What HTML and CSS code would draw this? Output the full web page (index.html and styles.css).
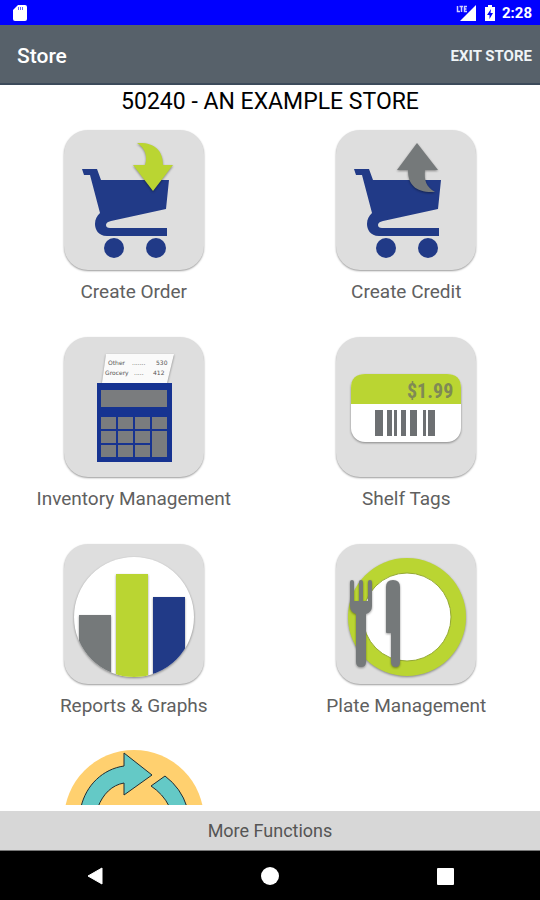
FILE: index.html
```html
<!DOCTYPE html>
<html lang="en">

<head>
  <meta charset="UTF-8">
  <meta name="viewport" content="width=device-width,initial-scale=1.0">
  <title>Store</title>
  <link rel="stylesheet" href="styles.css">
</head>

<body>
  <div class="page_main">

    <div class="status_bar">
      <svg class="icon_sd" viewBox="0 0 14 18" width="14" height="18">
        <path fill="#fff" d="M5 1H12Q14 1 14 3V15Q14 17 12 17H2Q0 17 0 15V6Z" />
        <path fill="#00f" fill-opacity=".6" d="M5 3h1v3h-1zM7 3h1v3h-1zM9 3h1v3h-1z" />
      </svg>
      <div class="status_right">
        <svg viewBox="0 0 22 18" width="22" height="18">
          <path fill="#fff" d="M20 1V17H4Z" />
          <path fill="#00f" d="M0 0H11V9H0Z" />
          <path fill="none" stroke="#fff" stroke-opacity=".8" stroke-width="1.500" d="M1.500 2V7.500H4M3.500 2.500H7M5.500 2.500V8M11 2.500H8.500V7.500H11M8.500 5H10.500" />
        </svg>
        <svg viewBox="0 0 12 18" width="12" height="18">
          <path fill="#fff" d="M4 1H8V3H11V17H1V3H4Z" />
          <path fill="#00f" d="M7 5L3 11H5.500V15L9 9H6.500Z" />
        </svg>
        <span>2:28</span>
      </div>
    </div>

    <header class="toolbar">
      <h1>Store</h1>
      <button type="button">EXIT STORE</button>
    </header>

    <main class="content">
      <h2>50240 - AN EXAMPLE STORE</h2>

      <div class="functions">

        <button type="button" class="box">
          <svg class="tile" viewBox="0 0 140 140">
            <g fill="#213a87">
              <path d="M18 39H33L37 50H105L102 79L47 91Q42 92 42 95Q42 98 46 98H103V106H43C34 106 31 99 31 94C31 89 33 86 36 83L26 45H20Z" />
              <circle cx="50" cy="118" r="10" />
              <circle cx="92" cy="118" r="10" />
            </g>
            <path class="raised" fill="#bad532" d="M73 13C90 12 99 20 99 35H109L89 61L69 35H81C84 26 81 18 73 13Z" />
          </svg>
          <span>Create Order</span>
        </button>

        <button type="button" class="box">
          <svg class="tile" viewBox="0 0 140 140">
            <g fill="#213a87">
              <path d="M18 39H33L37 50H105L102 79L47 91Q42 92 42 95Q42 98 46 98H103V106H43C34 106 31 99 31 94C31 89 33 86 36 83L26 45H20Z" />
              <circle cx="50" cy="118" r="10" />
              <circle cx="92" cy="118" r="10" />
            </g>
            <path class="raised" fill="#75797a" d="M81 13L102 40H89C88 50 90 57 99 62C80 63 72 55 72 40H61Z" />
          </svg>
          <span>Create Credit</span>
        </button>

        <button type="button" class="box">
          <svg class="tile" viewBox="0 0 140 140">
            <path class="raised" fill="#fafafa" d="M42 17H110L103 46H38Z" />
            <g class="receipt">
              <text x="44" y="28">Other</text>
              <text x="68" y="28">.......</text>
              <text x="92" y="28">530</text>
              <text x="41" y="38">Grocery</text>
              <text x="70" y="38">.....</text>
              <text x="89" y="38">412</text>
            </g>
            <path fill="#163391" d="M33 46H108V125H33Z" />
            <g fill="#7a7c7e">
              <path d="M37 53H103V70H37Z" />
              <path d="M37 80H52V92H37ZM54 80H69V92H54ZM71 80H86V92H71ZM88 80H103V92H88Z" />
              <path d="M37 94H52V106H37ZM54 94H69V106H54ZM71 94H86V106H71ZM88 94H103V120H88Z" />
              <path d="M37 108H52V120H37ZM54 108H69V120H54ZM71 108H86V120H71Z" />
            </g>
          </svg>
          <span>Inventory Management</span>
        </button>

        <button type="button" class="box">
          <svg class="tile" viewBox="0 0 140 140">
            <rect class="raised" x="15" y="37" width="110" height="68" rx="14" fill="#fff" />
            <path fill="#bad532" d="M15 67V51Q15 37 29 37H111Q125 37 125 51V67Z" />
            <text class="price" x="71" y="61">$1.99</text>
            <path fill="#6d7072" d="M39 73H47V99H39ZM51 73H56V99H51ZM58 73H61V99H58ZM65 73H70V99H65ZM74 73H81V99H74ZM87 73H90V99H87ZM92 73H99V99H92Z" />
          </svg>
          <span>Shelf Tags</span>
        </button>

        <button type="button" class="box">
          <svg class="tile" viewBox="0 0 140 140">
            <clipPath id="disc">
              <circle cx="70" cy="73" r="60" />
            </clipPath>
            <circle class="raised" cx="70" cy="73" r="60" fill="#fff" />
            <g clip-path="url(#disc)">
              <rect class="raised" x="15" y="71" width="32" height="70" fill="#75797a" />
              <rect class="raised" x="52" y="30" width="32" height="110" fill="#bad532" />
              <rect class="raised" x="89" y="53" width="32" height="90" fill="#213a87" />
            </g>
          </svg>
          <span>Reports &amp; Graphs</span>
        </button>

        <button type="button" class="box">
          <svg class="tile" viewBox="0 0 140 140">
            <circle class="raised" cx="71" cy="73" r="59" fill="#bad532" />
            <circle cx="71" cy="73" r="44" fill="#fff" stroke="#94a834" />
            <g class="raised" fill="#75797a">
              <path d="M14 38Q14 36 16 36Q18 36 18 38V57H23V38Q23 36 25 36Q27 36 27 38V57H32V38Q32 36 34 36Q36 36 36 38V62Q36 68 30 70V118Q30 123 25 123Q20 123 20 118V70Q14 68 14 62Z" />
              <path d="M50 88V43Q50 36 57 36Q64 36 64 43V118Q64 123 60 123Q55 123 55 118V89H51Q50 89 50 88Z" />
            </g>
          </svg>
          <span>Plate Management</span>
        </button>

        <button type="button" class="box" aria-label="Refresh">
          <svg class="round" viewBox="0 0 140 140">
            <circle cx="70" cy="69" r="70" fill="#ffd06f" />
            <g fill="#64c9c6" stroke="#222d33">
              <path d="M17 56C22 34 39 18 60 15V2L88 24L60 44V32C48 34 39 43 34 56Q32 62 32 70H15Q15 62 17 56Z" />
              <path d="M87 35L101 25Q117 37 123 56L125 70H108Q108 62 105 55Q99 43 87 35Z" />
            </g>
          </svg>
        </button>

      </div>
    </main>

    <button type="button" class="more">More Functions</button>

    <nav class="nav_bar">
      <button type="button" aria-label="Back">
        <svg viewBox="0 0 18 18" width="18" height="18">
          <path fill="#fff" stroke="#fff" stroke-linejoin="round" d="M2 9L16 1V17Z" />
        </svg>
      </button>
      <button type="button" aria-label="Home">
        <svg viewBox="0 0 18 18" width="18" height="18">
          <circle cx="9" cy="9" r="9" fill="#fff" />
        </svg>
      </button>
      <button type="button" aria-label="Recent apps">
        <svg viewBox="0 0 18 18" width="18" height="18">
          <rect x="1" y="1" width="17" height="17" rx="1" fill="#fff" />
        </svg>
      </button>
    </nav>

  </div>
</body>

</html>
```

FILE: styles.css
```css
html,
body {
  height: 100%;
  margin: 0;
  padding: 0;
  background-color: white;
  font-family: Roboto, "Liberation Sans", sans-serif;
}

button {
  margin: 0;
  padding: 0;
  border: none;
  background: none;
  font: inherit;
  color: inherit;
  cursor: pointer;
}

.page_main {
  height: 100%;
  display: flex;
  flex-direction: column;
}

.status_bar {
  flex: none;
  height: 25px;
  padding: 0 8px 0 13px;
  display: flex;
  align-items: center;
  justify-content: space-between;
  background-color: #0000ff;
  color: white;
}

.status_right {
  display: flex;
  align-items: center;
  gap: 6px;
  font-size: 15px;
  font-weight: 700;
}

.toolbar {
  flex: none;
  height: 60px;
  padding: 0 8px 0 17px;
  box-sizing: border-box;
  border-bottom: 2px solid #3c4a5a;
  display: flex;
  align-items: center;
  justify-content: space-between;
  background-color: #57616a;
  color: white;
}

.toolbar h1 {
  margin: 0;
  padding-top: 3px;
  font-size: 21px;
  font-weight: 500;
}

.toolbar button {
  padding-top: 3px;
  font-size: 15px;
  font-weight: 700;
  color: #eef3f6;
}

.content {
  flex: 1;
  min-height: 0;
  margin-bottom: 6px;
  overflow-y: auto;
  scrollbar-width: none;
}

.content h2 {
  margin: 0;
  padding: 2px 0 13px;
  font-size: 23px;
  font-weight: 400;
  line-height: 30px;
  text-align: center;
  color: black;
}

.functions {
  display: grid;
  grid-template-columns: repeat(2, 1fr);
  grid-auto-rows: 207px;
  column-gap: 5px;
}

.box {
  display: flex;
  flex-direction: column;
  align-items: center;
  justify-content: flex-start;
  gap: 8px;
  font-size: 19px;
  line-height: 28px;
  color: #606060;
}

.tile,
.round {
  width: 140px;
  height: 140px;
}

.round {
  overflow: visible;
}

.tile {
  border-radius: 24px;
  background-color: #dedede;
  box-shadow: 0 1px 2px rgba(0, 0, 0, 0.4);
}

.raised {
  filter: drop-shadow(0 1px 1px rgba(0, 0, 0, 0.4));
}

.receipt {
  font-family: "DejaVu Sans", sans-serif;
  font-size: 6px;
  fill: #555;
}

.price {
  font-family: "Liberation Sans Narrow", "Roboto Condensed", Roboto, sans-serif;
  font-size: 20px;
  font-weight: 700;
  fill: #7f8a55;
}

.more {
  flex: none;
  height: 40px;
  border-bottom: 1px solid #777;
  background-color: #d7d7d7;
  font-size: 18px;
  color: #555;
}

.nav_bar {
  flex: none;
  height: 49px;
  padding: 0 8px;
  display: grid;
  grid-template-columns: repeat(3, 1fr);
  background-color: black;
}

.nav_bar button {
  display: grid;
  place-content: center;
}
```
